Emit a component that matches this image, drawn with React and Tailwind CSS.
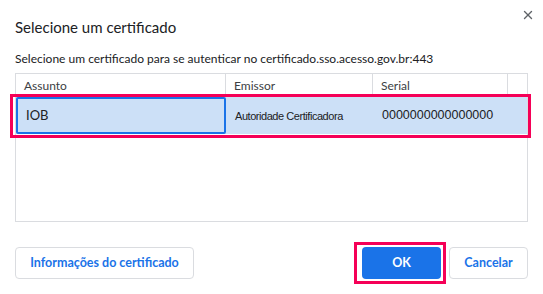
import { X } from "lucide-react";

const font = { fontFamily: 'Lato, "Noto Sans", sans-serif' };

export default function App() {
  return (
    <div className="relative w-[543px] h-[294px] bg-white text-[#202124] overflow-hidden" style={font}>
      {/* Close */}
      <button className="absolute right-[8px] top-[7px] w-[15px] h-[15px] flex items-center justify-center text-[#5f6368]">
        <X className="w-[14px] h-[14px]" strokeWidth={2.4} />
      </button>

      <div className="flex flex-col px-[15px] pt-[16px]">
        <h1 className="text-[15px] leading-[22px] text-[#202124]">Selecione um certificado</h1>
        <p className="mt-[12px] text-[12px] leading-[18px] text-[#202124]">
          Selecione um certificado para se autenticar no certificado.sso.acesso.gov.br:443
        </p>

        {/* Table */}
        <div className="mt-[5px] h-[149px] border border-[#dadce0] flex flex-col">
          <div className="flex h-[22px] text-[12px] text-[#3c4043] items-center">
            <div className="w-[210px] h-full pl-[8px] pt-[1px] flex items-center border-r border-[#dadce0]">Assunto</div>
            <div className="w-[147px] h-full pl-[8px] pt-[1px] flex items-center border-r border-[#dadce0]">Emissor</div>
            <div className="w-[135px] h-full pl-[8px] pt-[1px] flex items-center border-r border-[#dadce0]">Serial</div>
            <div className="flex-1" />
          </div>
          <div className="flex h-[38px] bg-[#cce0f7] items-center">
            <div className="w-[210px] h-[37px] pl-[8px] pt-[2px] flex items-center border-2 border-[#1a73e8] rounded-[2px] text-[13px] text-[#202124]">
              IOB
            </div>
            <div
              className="w-[147px] pl-[9px] pt-[2px] text-[11px] text-[#202124] tracking-[-0.45px]"
              style={{ fontFamily: '"Liberation Sans", sans-serif' }}
            >
              Autoridade Certificadora
            </div>
            <div
              className="pl-[9px] text-[12.5px] text-[#202124]"
              style={{ fontFamily: '"Liberation Sans", sans-serif' }}
            >
              0000000000000000
            </div>
          </div>
        </div>

        {/* Buttons */}
        <div className="mt-[25px] flex items-center">
          <button className="h-[32px] w-[179px] rounded-[4px] border border-[#dadce0] text-[12.5px] font-bold text-[#1a73e8]">
            Informações do certificado
          </button>
          <div className="flex-1" />
          <button className="h-[32px] w-[79px] rounded-[4px] bg-[#1a73e8] text-[12.5px] font-bold text-white">
            OK
          </button>
          <button className="ml-[8px] h-[32px] w-[79px] rounded-[4px] border border-[#dadce0] text-[12.5px] font-bold text-[#1a73e8]">
            Cancelar
          </button>
        </div>
      </div>

      {/* Annotation boxes */}
      <div className="absolute left-[10px] top-[94px] w-[521px] h-[44px] border-[3px] border-[#f50057] pointer-events-none" />
      <div className="absolute left-[354px] top-[242px] w-[92px] h-[42px] border-[3px] border-[#f50057] pointer-events-none" />
    </div>
  );
}
